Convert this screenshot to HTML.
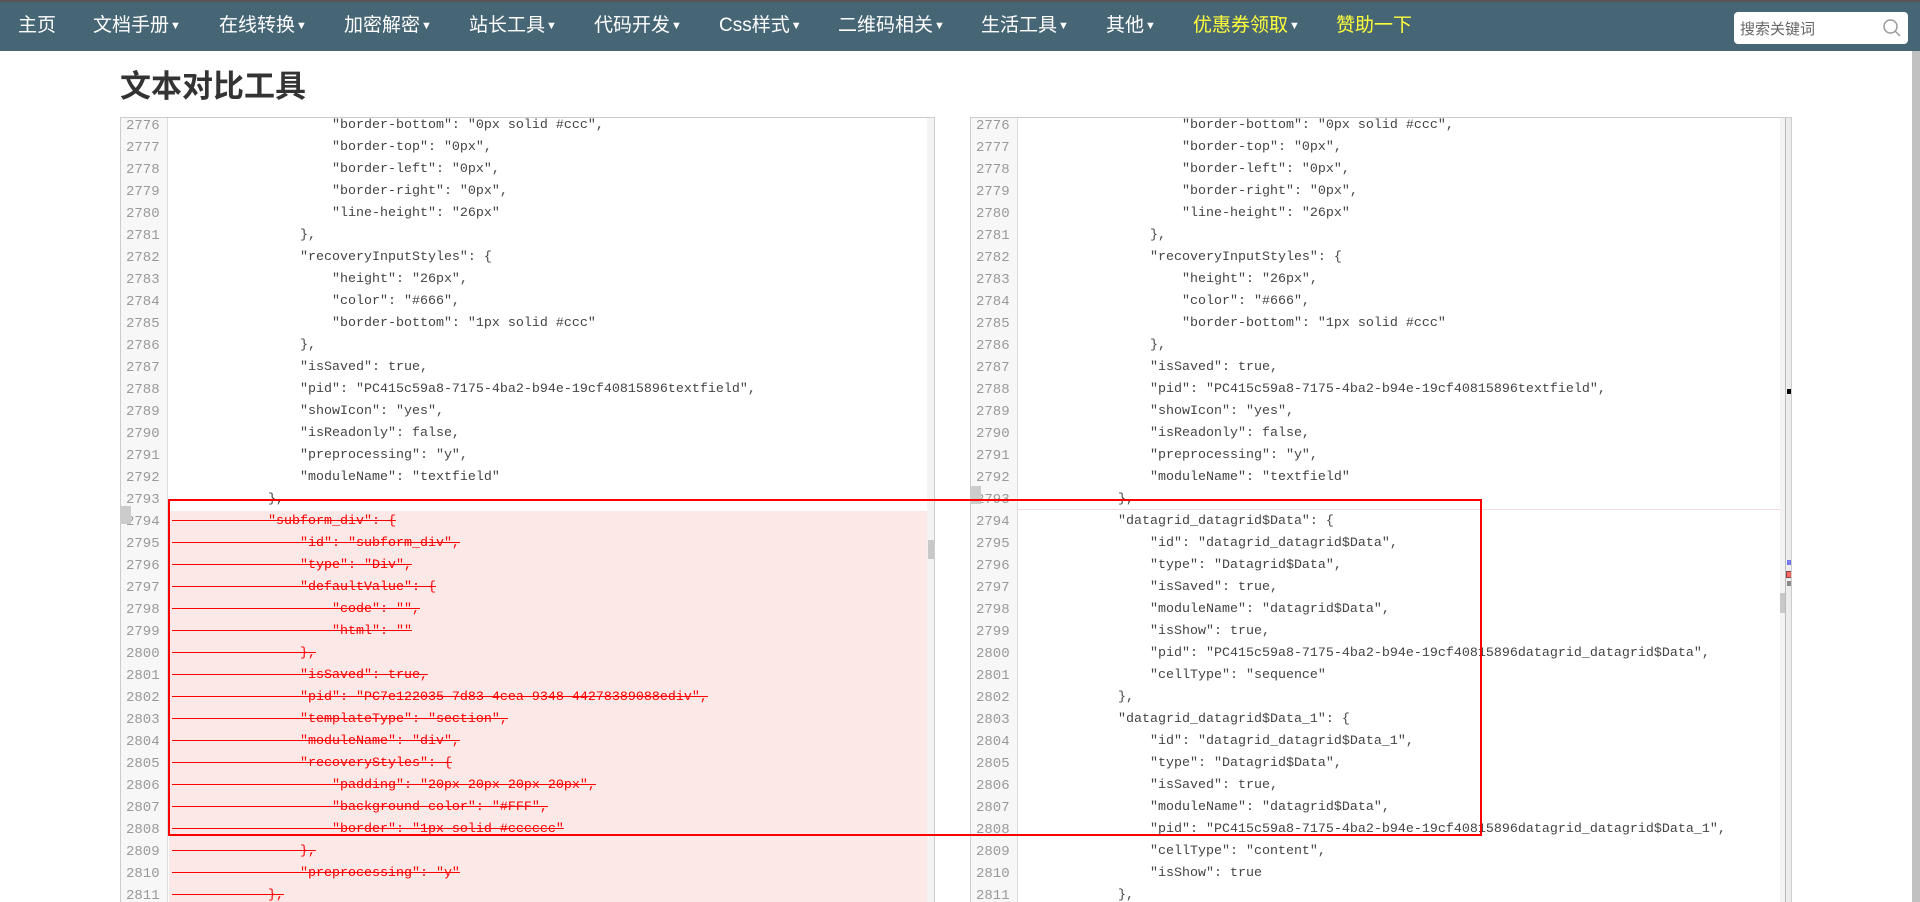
<!DOCTYPE html>
<html><head><meta charset="utf-8">
<style>
*{margin:0;padding:0;box-sizing:border-box}
html,body{width:1920px;height:902px;overflow:hidden}
body{background:#fff;font-family:"Liberation Sans","Noto Sans CJK SC",sans-serif;position:relative}
.nav{position:absolute;left:0;top:0;width:1920px;height:51px;background:#476675;border-top:2px solid #555}
.nav span{position:absolute;top:12px;font-size:19px;color:#fff;white-space:nowrap;line-height:24px}
.nav span.y{color:#ffff3a}
.nav i{font-style:normal;font-size:11px;vertical-align:2px;margin-left:1px}
.search{position:absolute;left:1734px;top:10px;width:174px;height:32px;background:#fff;border-radius:4px}
.search b{position:absolute;left:6px;top:6px;font-weight:normal;font-size:15px;color:#666}
h1{position:absolute;left:120px;top:68px;font-size:31px;font-weight:bold;color:#333;line-height:38px;font-family:"Liberation Sans","Noto Sans CJK SC",sans-serif}
.panel{position:absolute;top:117px;height:785px;border:1px solid #ccc;border-bottom:0;overflow:hidden;background:#fff}
.gut{position:absolute;left:0;top:0;width:47px;height:100%;background:#f7f7f7;border-right:1px solid #ddd}
.ln{position:absolute;left:0;width:46px;height:22px;line-height:22px;font-family:"Liberation Mono",monospace;font-size:14px;color:#999;text-align:left;padding-left:5px}
.cl{position:absolute;height:22px;line-height:22px;font-family:"Liberation Mono",monospace;font-size:13.33px;color:#444;white-space:pre}
.del{background:#fde8e8}
.del span{color:#f00;text-decoration:line-through;text-decoration-color:#f00}
</style></head><body>
<div class="nav">
<span style="left:18px">主页</span>
<span style="left:93px">文档手册<i>▼</i></span>
<span style="left:219px">在线转换<i>▼</i></span>
<span style="left:344px">加密解密<i>▼</i></span>
<span style="left:469px">站长工具<i>▼</i></span>
<span style="left:594px">代码开发<i>▼</i></span>
<span style="left:719px">Css样式<i>▼</i></span>
<span style="left:838px">二维码相关<i>▼</i></span>
<span style="left:981px">生活工具<i>▼</i></span>
<span style="left:1106px">其他<i>▼</i></span>
<span class="y" style="left:1193px">优惠券领取<i style="color:#fff">▼</i></span>
<span class="y" style="left:1336px">赞助一下</span>
<div class="search"><b>搜索关键词</b>
<svg style="position:absolute;left:148px;top:6px" width="20" height="20" viewBox="0 0 20 20"><circle cx="8.5" cy="8.5" r="6.5" fill="none" stroke="#999" stroke-width="1.5"/><line x1="13" y1="13" x2="18" y2="18" stroke="#999" stroke-width="1.5"/></svg></div>
</div>
<h1>文本对比工具</h1>

<div class="panel" style="left:120px;width:815px" id="L"><div class="gut"></div>
<div style="position:absolute;right:0;top:0;width:7px;height:100%;background:#f3f3f3"></div>
<div style="position:absolute;right:0;top:422px;width:6px;height:19px;background:#c8c8c8"></div>
<div style="position:absolute;left:0;top:388px;width:10px;height:18px;background:#ccc"></div>
</div>
<div class="panel" style="left:970px;width:822px" id="R"><div class="gut"></div>
<div style="position:absolute;left:809px;top:0;width:6px;height:100%;background:#f3f3f3"></div>
<div style="position:absolute;left:809px;top:475px;width:5px;height:20px;background:#c8c8c8"></div>
<div style="position:absolute;left:814px;top:0;width:8px;height:100%;background:#ececec;border-left:1px solid #bbb;border-right:1px solid #bbb"></div>
<div style="position:absolute;left:816px;top:271px;width:5px;height:5px;background:#000"></div>
<div style="position:absolute;left:816px;top:442px;width:5px;height:5px;background:#77e"></div>
<div style="position:absolute;left:816px;top:454px;width:5px;height:5px;background:#f66;outline:1px solid #844"></div>
<div style="position:absolute;left:816px;top:463px;width:5px;height:5px;background:#888"></div>
<div style="position:absolute;left:0;top:368px;width:10px;height:18px;background:#ccc"></div>
<div style="position:absolute;left:47px;top:391px;width:762px;height:1px;background:#f6dcdc"></div>
</div>
<div style="position:absolute;left:1912px;top:51px;width:8px;height:851px;background:#c1c1c1"></div>
<div style="position:absolute;left:168px;top:499px;width:1314px;height:337px;border:2px solid #f00"></div>

<script>
var common=[[20,'"border-bottom": "0px solid #ccc",'],[20,'"border-top": "0px",'],[20,'"border-left": "0px",'],[20,'"border-right": "0px",'],[20,'"line-height": "26px"'],[16,'},'],[16,'"recoveryInputStyles": {'],[20,'"height": "26px",'],[20,'"color": "#666",'],[20,'"border-bottom": "1px solid #ccc"'],[16,'},'],[16,'"isSaved": true,'],[16,'"pid": "PC415c59a8-7175-4ba2-b94e-19cf40815896textfield",'],[16,'"showIcon": "yes",'],[16,'"isReadonly": false,'],[16,'"preprocessing": "y",'],[16,'"moduleName": "textfield"'],[12,'},']];
var left=[[12,'"subform_div": {'],[16,'"id": "subform_div",'],[16,'"type": "Div",'],[16,'"defaultValue": {'],[20,'"code": "",'],[20,'"html": ""'],[16,'},'],[16,'"isSaved": true,'],[16,'"pid": "PC7e122035-7d83-4cea-9348-44278389088ediv",'],[16,'"templateType": "section",'],[16,'"moduleName": "div",'],[16,'"recoveryStyles": {'],[20,'"padding": "20px 20px 20px 20px",'],[20,'"background-color": "#FFF",'],[20,'"border": "1px solid #cccccc"'],[16,'},'],[16,'"preprocessing": "y"'],[12,'},']];
var right=[[12,'"datagrid_datagrid$Data": {'],[16,'"id": "datagrid_datagrid$Data",'],[16,'"type": "Datagrid$Data",'],[16,'"isSaved": true,'],[16,'"moduleName": "datagrid$Data",'],[16,'"isShow": true,'],[16,'"pid": "PC415c59a8-7175-4ba2-b94e-19cf40815896datagrid_datagrid$Data",'],[16,'"cellType": "sequence"'],[12,'},'],[12,'"datagrid_datagrid$Data_1": {'],[16,'"id": "datagrid_datagrid$Data_1",'],[16,'"type": "Datagrid$Data",'],[16,'"isSaved": true,'],[16,'"moduleName": "datagrid$Data",'],[16,'"pid": "PC415c59a8-7175-4ba2-b94e-19cf40815896datagrid_datagrid$Data_1",'],[16,'"cellType": "content",'],[16,'"isShow": true'],[12,'},']];
function build(id,lines,nDel,w){
 var p=document.getElementById(id),h='';
 lines.forEach(function(l,i){
  var top=-3+22*i, del=i>=18&&nDel;
  h+='<div class="ln" style="top:'+top+'px">'+(2776+i)+'</div>';
  var txt=' '.repeat(l[0])+l[1];
  txt=txt.replace(/&/g,'&amp;').replace(/</g,'&lt;');
  if(del) h+='<div class="cl del" style="left:48px;width:'+w+'px;top:'+top+'px;padding-left:3px"><span>'+txt+'</span></div>';
  else h+='<div class="cl" style="left:51px;top:'+top+'px">'+txt+'</div>';
 });
 p.querySelector('.gut').insertAdjacentHTML('afterend',h);
}
build('L',common.concat(left),true,759);
build('R',common.concat(right),false,0);
</script>
</body></html>
